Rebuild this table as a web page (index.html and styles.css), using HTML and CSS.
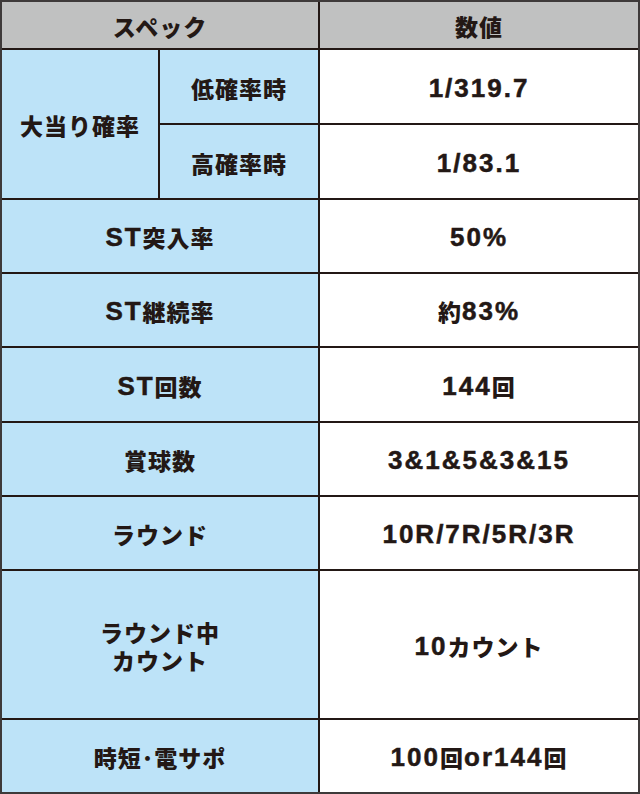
FILE: index.html
```html
<!DOCTYPE html>
<html lang="ja">
<head>
<meta charset="utf-8">
<title>スペック</title>
<link rel="stylesheet" href="styles.css">
</head>
<body>
<div class="spec">
  <div class="cell head span2">スペック</div>
  <div class="cell head">数値</div>

  <div class="cell label tall">大当り確率</div>
  <div class="cell label">低確率時</div>
  <div class="cell val"><span class="n">1/319.7</span></div>
  <div class="cell label">高確率時</div>
  <div class="cell val"><span class="n">1/83.1</span></div>

  <div class="cell label span2"><span class="n">ST</span>突入率</div>
  <div class="cell val"><span class="n">50%</span></div>

  <div class="cell label span2"><span class="n">ST</span>継続率</div>
  <div class="cell val">約<span class="n">83%</span></div>

  <div class="cell label span2"><span class="n">ST</span>回数</div>
  <div class="cell val"><span class="n">144</span>回</div>

  <div class="cell label span2">賞球数</div>
  <div class="cell val"><span class="n">3&amp;1&amp;5&amp;3&amp;15</span></div>

  <div class="cell label span2">ラウンド</div>
  <div class="cell val"><span class="n">10R/7R/5R/3R</span></div>

  <div class="cell label span2 multi">ラウンド中<br>カウント</div>
  <div class="cell val"><span class="n">10</span>カウント</div>

  <div class="cell label span2">時短･電サポ</div>
  <div class="cell val"><span class="n">100</span>回<span class="n">or144</span>回</div>
</div>
</body>
</html>
```
FILE: styles.css
```css
html, body {
  margin: 0;
  padding: 0;
  background: #ffffff;
}

.spec {
  box-sizing: border-box;
  width: 640px;
  height: 794px;
  border: 2px solid #3e3a3a;
  background: #231815;
  display: grid;
  grid-template-columns: 156px 158px 318px;
  grid-template-rows: 46px 73px 73px 72px 72px 73px 72px 72px 147px 72px;
  gap: 2px;
  font-family: "Noto Sans CJK JP", "Liberation Sans", sans-serif;
  font-weight: 900;
  font-size: 23px;
  letter-spacing: 1px;
  color: #231815;
}

.cell {
  display: flex;
  align-items: center;
  justify-content: center;
  text-align: center;
  line-height: 28px;
  padding-top: 2px;
  box-sizing: border-box;
}

.head {
  background: #c0c1c1;
}

.label {
  background: #bde3f8;
}

.val {
  background: #ffffff;
}

.span2 {
  grid-column: span 2;
}

.tall {
  grid-row: span 2;
}

.n {
  font-family: "Liberation Sans", "Noto Sans CJK JP", sans-serif;
  font-weight: 700;
  font-size: 26px;
  letter-spacing: 2px;
  -webkit-text-stroke: 0.5px #231815;
}
```
